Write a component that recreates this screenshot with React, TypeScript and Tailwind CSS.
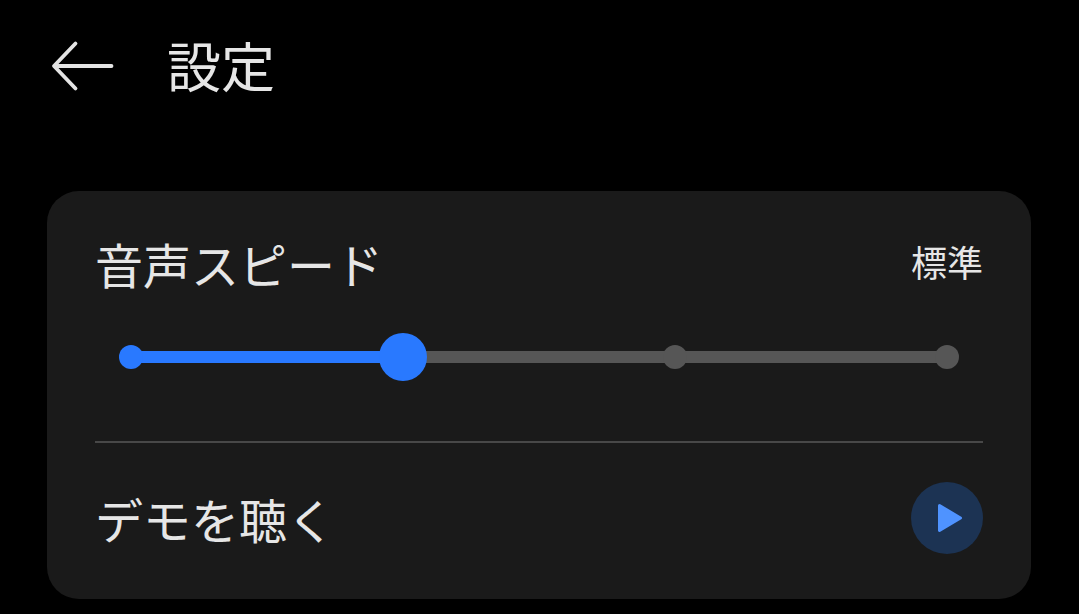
export default function App() {
  return (
    <div className="h-[614px] w-[1079px] overflow-hidden bg-black font-['Noto_Sans_CJK_JP','Noto_Sans',sans-serif] text-[#e6e6e6]">
      <header className="flex h-[132px] items-center pl-[50px]">
        <svg width="66" height="56" viewBox="0 0 66 56" fill="none" className="shrink-0">
          <path d="M61.5 28H5M25.5 5.5 4 28l21.5 22.5" stroke="#e4e4e4" strokeWidth="3.8" strokeLinecap="round" strokeLinejoin="round" />
        </svg>
        <h1 className="ml-[51px] -mt-[3px] text-[54px] leading-none font-normal">設定</h1>
      </header>
      <section className="mx-[47px] mt-[59px] h-[408px] w-[984px] rounded-[32px] bg-[#1a1a1a] px-[48px]">
        <div className="flex h-[252px] flex-col border-b-2 border-[#484848]">
          <div className="flex items-start justify-between pt-[42px]">
            <span className="text-[48px] leading-[60px]">音声スピード</span>
            <span className="mt-[2px] text-[36px] leading-[52px]">標準</span>
          </div>
          <div className="relative mt-[40px] flex h-[48px] items-center justify-between px-[24px]">
            <div className="absolute inset-x-[36px] top-[18px] h-[12px] bg-[#565656]" />
            <div className="absolute left-[36px] top-[18px] h-[12px] w-[272px] bg-[#2979ff]" />
            <span className="relative h-[24px] w-[24px] rounded-full bg-[#2979ff]" />
            <span className="relative -ml-[12px] h-[48px] w-[48px] rounded-full bg-[#2979ff]" />
            <span className="relative -ml-[12px] h-[24px] w-[24px] rounded-full bg-[#565656]" />
            <span className="relative h-[24px] w-[24px] rounded-full bg-[#565656]" />
          </div>
        </div>
        <div className="flex items-center justify-between pt-[39px]">
          <span className="text-[48px] leading-[72px]">デモを聴く</span>
          <button className="flex h-[72px] w-[72px] items-center justify-center rounded-full bg-[#1c3353]">
            <svg width="72" height="72" viewBox="0 0 72 72">
              <path d="M28.5 23.5 49.5 36 28.5 48.5Z" fill="#4f93ff" stroke="#4f93ff" strokeWidth="3" strokeLinejoin="round" />
            </svg>
          </button>
        </div>
      </section>
    </div>
  );
}
